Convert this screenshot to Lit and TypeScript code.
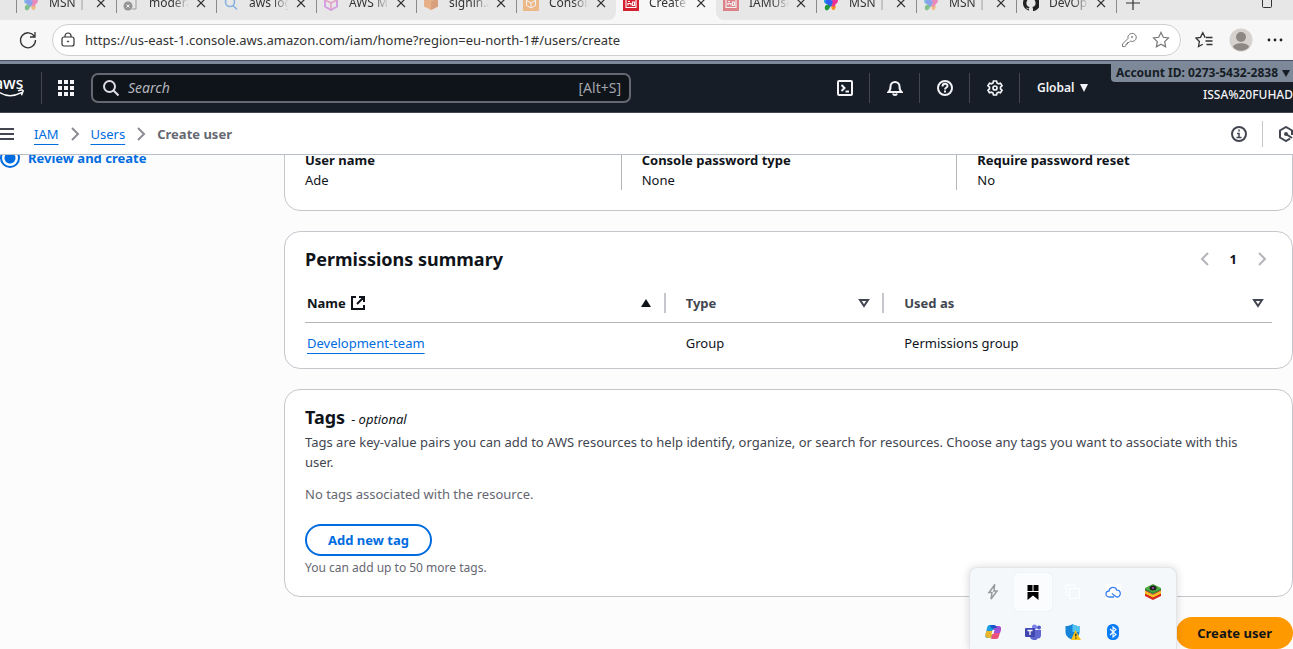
import { LitElement, html, svg, css } from "lit";
import { customElement } from "lit/decorators.js";

const msn = svg`<path d="M8 8C4 2 1 3 1 6s3 4 7 3z" fill="#1fa2e8"/><path d="M8 9C3 9 1 11 2 14s5 1 6-5z" fill="#1e9a3c"/><path d="M8 8c1-6 7-7 7-3s-3 5-7 4z" fill="#e8309a"/><path d="M8 9c4 0 6 2 4 5s-4 0-4-5z" fill="#f7931e"/><path d="M2 7l6 5 2-5-4-5z" fill="#2f5ff0"/><path d="M10 7l4 0-3 5-2-1z" fill="#f0308a"/>`;
const iam = svg`<rect width="16" height="16" fill="#d5202f"/><path d="M3 4h10v8.500H3zM5 10.500V8.500h3v2M9.500 7h2v3.500h-2zM5 6.500h2" fill="none" stroke="#fff" stroke-width="1.100"/>`;
const icons: Record<string, unknown> = {
  msn,
  iam,
  moderation: svg`<path d="M6 2h7v12H9" fill="none" stroke="#555"/><circle cx="5" cy="11" r="4.500" fill="#444"/><path d="M3.500 9.500l3 3m0-3l-3 3" stroke="#fff"/>`,
  search: svg`<circle cx="7" cy="7" r="4.500" fill="none" stroke="#2a7fd9" stroke-width="1.600"/><path d="M10 10.500l4 4" stroke="#2a7fd9" stroke-width="1.600"/>`,
  cube: svg`<path d="M8 1l6 3.500v7L8 15l-6-3.500v-7z" fill="none" stroke="#c05be0" stroke-width="2"/><path d="M2 5l6 3 6-3M8 8v7" fill="none" stroke="#e0559b" stroke-width="1.500"/>`,
  box: svg`<path d="M8 0l7 3v8.500L8 15l-7-3.500V3z" fill="#e8782c"/><path d="M8 7l7-4v8.500L8 15z" fill="#c95a14"/>`,
  console: svg`<rect width="16" height="16" fill="#f08a28"/><path d="M8 3l4.500 2.500v5L8 13l-4.500-2.500v-5zM3.500 5.500L8 8l4.500-2.500M8 8v5" fill="none" stroke="#fff"/>`,
  github: svg`<path d="M8 0a8 8 0 0 0-2.500 15.600c.5 0 .5-.5.5-1.500C3.500 14.500 3.500 13 3 12.500c1 0 1.500 1.500 3 1 0-.8.500-1.200.700-1.400C4 11.500 3.400 9.500 3.400 8c0-1 .3-1.700.8-2.200 0-.6-.2-1.300.1-2.100 1 0 1.700.6 2.200 1h3c.5-.4 1.200-1 2.200-1 .3.8.1 1.500.1 2.100.5.500.8 1.200.8 2.200 0 1.500-.6 3.500-3.300 4.100.4.400.7 1 .7 2v1.500c0 .4 0 .5.5.5A8 8 0 0 0 8 0z" fill="#222"/>`,
};

const icon = (name: string) => html`<svg class="fav" viewBox="0 0 16 16" aria-hidden="true">${icons[name]}</svg>`;

const tabs = [
  { icon: "msn", title: "MSN | Personal", dim: true },
  { icon: "moderation", title: "moderation", dim: true },
  { icon: "search", title: "aws login", dim: true },
  { icon: "cube", title: "AWS Management", dim: true },
  { icon: "box", title: "signin.aws", dim: true },
  { icon: "console", title: "Console Home", dim: true },
  { icon: "iam", title: "Create user", active: true },
  { icon: "iam", title: "IAMUser", dim: true },
  { icon: "msn", title: "MSN | Personal" },
  { icon: "msn", title: "MSN | Personal", dim: true },
  { icon: "github", title: "DevOps" },
];

@customElement("browser-chrome")
export class BrowserChrome extends LitElement {
  static styles = css`
    :host { display: block; font-family: "Noto Sans", sans-serif; background: #f7f7f7; color: #333; }
    * { box-sizing: border-box; }
    button { border: 0; background: none; padding: 0; color: inherit; font: inherit; }
    svg { display: block; fill: none; stroke: currentColor; }
    .strip { height: 20px; display: flex; align-items: flex-end; overflow: hidden; background: #f7f7f7; }
    .lead { width: 16px; height: 34px; flex: none; background: #e7e7e7; }
    .tab { width: 100px; height: 34px; flex: none; display: flex; align-items: center; padding: 0 10px 0 6px; background: #e7e7e7; }
    .tab::before { content: ""; width: 1px; height: 20px; background: #8a8a8a; margin-left: -6px; margin-right: 6px; }
    .tab.active, .tab.active::before, .tab.after::before { background: transparent; }
    .tab.before { border-bottom-right-radius: 8px; }
    .tab.after { border-bottom-left-radius: 8px; }
    .fav { width: 16px; height: 16px; flex: none; stroke: none; }
    .dim .fav { opacity: 0.5; }
    .title { width: 40px; flex: none; margin-left: 10px; font-size: 12px; line-height: 16px; overflow: hidden; white-space: nowrap; mask-image: linear-gradient(90deg, #000 60%, transparent); }
    .close { margin-left: auto; }
    .rest { flex: 1; height: 34px; display: flex; align-items: center; justify-content: space-between; padding: 0 20px 0 10px; background: #e7e7e7; }
    .rest::before { content: ""; width: 1px; height: 20px; background: #8a8a8a; margin-left: -10px; }
    .new { margin-left: 9px; margin-right: auto; }
    .bar { height: 40px; display: flex; align-items: center; padding: 0 10px 0 18px; }
    .field { flex: 1; height: 32px; display: flex; align-items: center; gap: 10px; margin: 0 14px; padding: 0 10px 0 8px; background: #fff; border: 1px solid #cfcfcf; border-radius: 16px; }
    .url { flex: 1; min-width: 0; border: 0; outline: 0; padding: 0; background: none; color: #333; font: 13px/20px "Noto Sans", sans-serif; }
    .gray { color: #777; }
    .star { margin-left: 5px; }
    .end { display: flex; align-items: center; gap: 14px; }
  `;
  render() {
    return html`
      <div class="strip" role="tablist">
        <span class="lead"></span>
        ${tabs.map(
          (t, i) => html`<div class="tab ${t.active ? "active" : ""} ${t.dim ? "dim" : ""} ${i === 5 ? "before" : i === 7 ? "after" : ""}" role="tab">
            ${icon(t.icon)}<span class="title">${t.title}</span>
            <button class="close" aria-label="Close tab"><svg width="10" height="10"><path d="M1 1l8 8m0-8l-8 8" stroke-width="1.200" /></svg></button>
          </div>`
        )}
        <div class="rest">
          <button class="new" aria-label="New tab"><svg width="14" height="14"><path d="M7 0v14M0 7h14" stroke-width="1.200" /></svg></button>
          <button aria-label="Maximize"><svg width="11" height="11"><rect x=".5" y=".5" width="9" height="9" rx="1" /></svg></button>
        </div>
      </div>
      <div class="bar">
        <button aria-label="Refresh"><svg width="20" height="20" viewBox="0 0 20 20"><path d="M16.500 6.500A7.500 7.500 0 1 0 17.500 10M17 2v5h-5" stroke-width="1.300" /></svg></button>
        <div class="field">
          <svg width="14" height="16" viewBox="0 0 14 16"><rect x="1" y="5" width="12" height="9" rx="2" stroke-width="1.200"/><path d="M4 5V4a3 3 0 0 1 6 0v1" stroke-width="1.200"/><circle cx="7" cy="9.500" r=".6" fill="currentColor"/></svg>
          <input class="url" aria-label="Address" value="https://us-east-1.console.aws.amazon.com/iam/home?region=eu-north-1#/users/create" />
          <button class="gray" aria-label="Passwords"><svg width="16" height="16" viewBox="0 0 16 16"><path d="M10.500 1.500a4 4 0 1 1-1 7.500L8 10.500H6.500V12H5v1.500L3.800 14.500H1.500v-2.500L7 6.500a4 4 0 0 1 3.500-5z"/><circle cx="11" cy="5" r=".6"/></svg></button>
          <button class="gray star" aria-label="Favorite"><svg width="18" height="18" viewBox="0 0 18 18"><path d="M9 1.500l2.300 4.800 5.200.7-3.800 3.600.9 5.200L9 13.300l-4.600 2.500.9-5.200L1.500 7l5.200-.7z" stroke-width="1.200"/></svg></button>
        </div>
        <div class="end">
          <button aria-label="Favorites"><svg width="20" height="18" viewBox="0 0 20 18"><path d="M10.500 6.300H10L7.800 1.800 5.500 6.300 1 7l3.400 3.500-.9 5 4.300-2.300M11 6.500h6.500M10.500 10H17.500M11.500 13.500h6" stroke-width="1.300"/></svg></button>
          <button aria-label="Profile"><svg width="24" height="24" viewBox="0 0 24 24" stroke="none"><circle cx="12" cy="12" r="11.500" fill="#d5d2cf" stroke="none"/><circle cx="12" cy="9" r="5" fill="#8d8883" stroke="none"/><path d="M4 19c1-5 15-5 16 0-4 5-12 5-16 0z" fill="#8d8883" stroke="none"/></svg></button>
          <button aria-label="Settings and more"><svg width="16" height="4" viewBox="0 0 16 4"><g fill="#222" stroke="none"><circle cx="2" cy="2" r="1.400"/><circle cx="8" cy="2" r="1.400"/><circle cx="14" cy="2" r="1.400"/></g></svg></button>
        </div>
      </div>
    `;
  }
}

@customElement("aws-header")
export class AwsHeader extends LitElement {
  static styles = css`
    :host { display: block; font-family: "Noto Sans", sans-serif; }
    * { box-sizing: border-box; }
    button { border: 0; background: none; padding: 0; color: inherit; font: inherit; }
    svg { display: block; fill: none; stroke: currentColor; stroke-width: 2; }
    .band { height: 4px; background: #7d8998; border-top: 1px solid #424f5f; }
    .top { height: 49px; display: flex; align-items: center; background: #161d26; color: #f3f3f7; border-bottom: 1px solid #424650; }
    .logo { width: 42px; height: 32px; flex: none; border-right: 1px solid #424650; }
    .mark { font: 500 16px "Noto Sans", sans-serif; fill: #fff; stroke: none; }
    .apps { width: 49px; display: flex; justify-content: center; padding-right: 1px; }
    .search { width: 540px; height: 30px; flex: none; display: flex; align-items: center; gap: 9px; padding: 0 8px 0 10px; border: 2px solid #656871; border-radius: 7px; background: #0f141a; color: #dedee3; font-size: 14px; line-height: 20px; }
    .search input { flex: 1; min-width: 0; border: 0; outline: 0; background: none; padding: 0; color: #dedee3; font: italic 14px/20px "Noto Sans", sans-serif; }
    .search input::placeholder { color: #b4b4bb; }
    .hint { color: #a4a4ad; }
    .tools { margin-left: auto; height: 48px; display: flex; align-items: center; }
    .tool { width: 50px; height: 30px; display: flex; align-items: center; justify-content: center; border-right: 1px solid #424650; }
    .global { width: 91px; display: flex; align-items: center; gap: 6px; padding-left: 17px; font-size: 12px; font-weight: 600; line-height: 16px; }
    .account { width: 182px; height: 48px; display: flex; flex-direction: column; align-items: flex-end; gap: 5px; font-size: 12px; line-height: 16px; font-weight: 500; }
    .id { width: 100%; height: 18px; display: flex; align-items: center; justify-content: flex-end; gap: 4px; padding-right: 3px; white-space: nowrap; border-bottom-left-radius: 4px; background: #7d8998; color: #161d26; font-weight: 700; }
    .crumbs { height: 42px; display: flex; align-items: center; gap: 11px; background: #fff; border-bottom: 1px solid #b6bec9; color: #424650; font-size: 13px; line-height: 20px; }
    .crumbs nav { display: flex; align-items: center; gap: 11px; margin-left: 9px; }
    .crumbs a { color: #006ce0; text-decoration: underline; text-underline-offset: 5px; }
    .sep { color: #8c8c94; }
    .now { font-weight: 700; color: #656871; }
    .side { margin-left: auto; display: flex; align-items: center; overflow: hidden; }
    .info { padding-right: 15px; border-right: 1px solid #c6c6cd; height: 26px; }
    .hex { width: 15px; margin-left: 15px; overflow: hidden; }
  `;
  render() {
    return html`
      <div class="band"></div>
      <header class="top">
        <svg class="logo" viewBox="0 0 42 32"><text class="mark" x="-6" y="17">aws</text><path d="M-2 19.500c8 6 17 5 24.500 1M18.500 19c3-1.500 6-1 5 .5l-1.500 4" stroke="#fff" stroke-width="1.500"/></svg>
        <button class="apps" aria-label="Services"><svg width="16" height="16" viewBox="0 0 16 16"><path d="M0 2h16M0 8h16M0 14h16" stroke-width="4" stroke-dasharray="4 2"/></svg></button>
        <label class="search">
          <svg width="16" height="16" viewBox="0 0 16 16"><circle cx="6.500" cy="6.500" r="5.500"/><path d="M10.500 10.500l5 5"/></svg>
          <input placeholder="Search" aria-label="Search" /><span class="hint">[Alt+S]</span>
        </label>
        <div class="tools">
          <button class="tool" aria-label="CloudShell"><svg width="16" height="16" viewBox="0 0 16 16"><rect x="1" y="1" width="14" height="14" rx="1"/><path d="M4.500 5L7.500 8 4.500 11M8.500 11.500H12"/></svg></button>
          <button class="tool" aria-label="Notifications"><svg width="16" height="16" viewBox="0 0 16 16"><path d="M1.500 12c2-1.500 2-3 2-5.500a4.500 4.500 0 0 1 9 0c0 2.500 0 4 2 5.500zM6 13.500c.5 2 3.500 2 4 0"/></svg></button>
          <button class="tool" aria-label="Help"><svg width="16" height="16" viewBox="0 0 16 16"><circle cx="8" cy="8" r="7"/><path d="M5.500 6.500C5.500 3 10.500 3 10.500 6c0 1.500-2.500 1.500-2.500 3.500M8 10.500v2"/></svg></button>
          <button class="tool" aria-label="Settings"><svg width="16" height="16" viewBox="0 0 16 16"><path d="M6.500 1h3l.5 2 1.500.8 2-.6 1.500 2.600L13.500 7.200v1.600L15 10.200l-1.500 2.600-2-.6-1.500.8-.5 2h-3L6 13l-1.500-.8-2 .6L1 10.200l1.500-1.400V7.200L1 5.800l1.500-2.600 2 .6L6 3z" stroke-width="1.700"/><circle cx="8" cy="8" r="2" stroke-width="1.700"/></svg></button>
          <button class="global">Global <svg width="8" height="8"><path d="M0 0h8L4 8z" fill="currentColor" stroke="none"/></svg></button>
          <div class="account">
            <button class="id">Account ID: 0273-5432-2838 <svg width="8" height="7"><path d="M0 0h8L4 7z" fill="currentColor" stroke="none"/></svg></button>
            <span>ISSA%20FUHAD</span>
          </div>
        </div>
      </header>
      <div class="crumbs">
        <button aria-label="Open navigation"><svg width="14" height="14"><path d="M0 2h14M0 7h14M0 12h14"/></svg></button>
        <nav aria-label="Breadcrumbs">
          <a href="#iam">IAM</a>
          <svg class="sep" width="10" height="14"><path d="M2 1l6 6-6 6"/></svg>
          <a href="#users">Users</a>
          <svg class="sep" width="10" height="14"><path d="M2 1l6 6-6 6"/></svg>
          <span class="now">Create user</span>
        </nav>
        <div class="side">
          <button class="info" aria-label="Info"><svg width="16" height="16" viewBox="0 0 16 16"><circle cx="8" cy="8" r="7"/><path d="M8 3.500v2M6 7.500h2v4M5.500 11.500h5" stroke-width="1.500"/></svg></button>
          <button class="hex" aria-label="Assistant"><svg width="16" height="16" viewBox="0 0 16 16"><path d="M14 9V4.500L8 1 2 4.500v7L8 15l4-2.300"/><path d="M8 8l6 4"/><circle cx="8" cy="8" r="1" fill="currentColor"/></svg></button>
        </div>
      </div>
    `;
  }
}

@customElement("system-tray")
export class SystemTray extends LitElement {
  static styles = css`
    :host { display: grid; grid-template-columns: repeat(5, 40px); grid-auto-rows: 40px; padding: 4px 3px 0; background: #f5f8fb; border: 1px solid #e3e5e8; border-bottom: 0; border-radius: 8px 8px 0 0; box-shadow: 0 0 8px rgba(0, 0, 0, 0.15); }
    button { display: flex; align-items: center; justify-content: center; padding: 0; margin: 1px; border: 0; border-radius: 4px; background: none; }
    .on { background: #fbfcfd; box-shadow: 0 0 1px #c8ccd2; }
  `;
  render() {
    const glyphs: [string, unknown][] = [
      ["Power", svg`<path d="M9.500 1L4 8.500h3L6 15l6-8H9z" fill="none" stroke="#999" stroke-width="1.500"/>`],
      ["Bookmark", svg`<path d="M2.500 1h5v6h-5zM8.500 1h5v6h-5zM2.500 8h11v8L8 11.500 2.500 16z" fill="#000"/>`],
      ["Windows", svg`<path d="M1 1h9v3M1 1v10h3M4.500 4.500h10v10h-10z" fill="none" stroke="#fff"/>`],
      ["Cloud", svg`<rect width="16" height="16" rx="2" fill="#fff"/><path d="M9 13H4a3 3 0 0 1 0-6 4 4 0 0 1 7.800-.8A3.400 3.400 0 0 1 12 13c-2 0-3-2-5-3.500" fill="none" stroke="#3b82f0" stroke-width="1.300"/>`],
      ["Emulator", svg`<path d="M0 9l8 4 8-4v3l-8 4-8-4z" fill="#d9251f"/><path d="M0 7l8 4 8-4v2.500l-8 4-8-4z" fill="#f6c51b"/><path d="M0 5.500l8 4 8-4V7l-8 4-8-4z" fill="#e04a22"/><path d="M0 4l8 4 8-4v2l-8 4-8-4z" fill="#2a8c35"/><path d="M8 0l8 4-8 4.500L0 4z" fill="#4dab3c"/><ellipse cx="8" cy="4" rx="3.500" ry="2.500" fill="#222"/><circle cx="8" cy="4" r="1" fill="#a050c0"/>`],
      ["Copilot", svg`<path d="M5 1h5L7 12c-.5 2-1.500 2-3 2H3c-3 0-3-2-2-5l1-5c.5-2 1-3 3-3z" fill="#1b9de2"/><path d="M1.500 7H8l-1.300 5c-.5 2-1.500 2-3 2-3 0-4-2-3-5z" fill="#e9b62c"/><path d="M11 15H6L9 4c.5-2 1.500-2 3-2h1c3 0 3.500 2 2.500 5l-1.500 5c-.5 2-1 3-3 3z" fill="#e8527c"/><path d="M9 4c.5-2 1.500-2 3-2h1c3 0 3.500 2 2.500 5L15 9H7.500z" fill="#a24fd8"/><path d="M5 1h4c2 0 2.500 2 3 3H9.500L7 5z" fill="#1a56c8"/><path d="M7.500 6h2L8.500 10h-2z" fill="#fff"/>`],
      ["Teams", svg`<circle cx="9.500" cy="3" r="2.500" fill="#7b83eb"/><circle cx="14" cy="3.500" r="2" fill="#5059c9"/><path d="M5 6h11v5c0 3-2 4-3 3-1 3-7 3-8-1z" fill="#6068d0"/><rect y="4" width="10" height="9" rx="1" fill="#4048b0"/><path d="M2.500 6.500h5M5 6.500V11" stroke="#fff" stroke-width="1.300"/>`],
      ["Security", svg`<path d="M7.500 0c2 1.500 4 2 7 2v6c0 4-3 6-7 8-4-2-7-4-7-8V2c3 0 5-.5 7-2z" fill="#1583d6"/><path d="M7.500 0v8h7V2c-3 0-5-.5-7-2z" fill="#50c3f0"/><path d="M10.500 6L16 16H6z" fill="#fcc51c"/><path d="M10.900 9.500v3M10.900 13.500v1.200" stroke="#222" stroke-width="1.200"/>`],
      ["Bluetooth", svg`<rect x="2" width="12" height="16" rx="5.500" fill="#0a7cf5"/><path d="M5 5l6 5.500L8 13V3l3 2.500L5 11" fill="none" stroke="#fff" stroke-width="1.100"/>`],
    ];
    return glyphs.map(([n, g]) => html`<button class=${n === "Bookmark" ? "on" : ""} aria-label=${n}><svg width="16" height="16" viewBox="0 0 16 16">${g}</svg></button>`);
  }
}

const facts = [
  ["User name", "Ade"],
  ["Console password type", "None"],
  ["Require password reset", "No"],
];

@customElement("app-root")
export class AppRoot extends LitElement {
  static styles = css`
    :host { position: relative; display: flex; flex-direction: column; height: 100vh; overflow: hidden; background: #fcfcfd; color: #0f141a; font: 13px/20px "Noto Sans", sans-serif; }
    * { box-sizing: border-box; }
    h2, p, dl, dd { margin: 0; }
    button { font: inherit; padding: 0; border: 0; background: none; color: inherit; }
    a { color: #006ce0; text-decoration: underline; text-underline-offset: 5px; }
    svg { display: block; }
    .view { flex: 1; min-height: 0; display: flex; align-items: flex-start; overflow: hidden; }
    .steps { width: 284px; flex: none; display: flex; align-items: center; margin-top: -7px; color: #006ce0; font-weight: 700; }
    .steps input { appearance: none; width: 20px; height: 20px; margin: 0; border: 2px solid #006ce0; border-radius: 50%; background: radial-gradient(circle, #006ce0 5px, #fff 6px); }
    .steps label { display: flex; align-items: center; gap: 8px; }
    .cards { flex: 1; min-width: 0; display: flex; flex-direction: column; gap: 20px; margin-top: -26px; }
    .card { padding: 20px; border: 1px solid #c6c6cd; border-radius: 16px; background: #fff; }
    .facts { display: grid; grid-template-columns: repeat(3, 1fr); margin: 0 -20px; }
    .fact { padding: 0 20px; }
    .fact + .fact { border-left: 1px solid #b4b4bb; }
    dt { font-weight: 700; }
    .head { display: flex; justify-content: space-between; align-items: center; }
    h2 { font-size: 18px; line-height: 24px; font-weight: 700; }
    .pages { display: flex; align-items: center; gap: 20px; padding: 0 5px; font-weight: 700; }
    .pages button { color: #b4b4bb; }
    .card.perm { padding-top: 15px; padding-bottom: 14px; }
    table { width: 100%; margin-top: 10px; table-layout: fixed; border-collapse: collapse; text-align: left; }
    th { height: 41px; padding: 0 0 9px; vertical-align: bottom; border-bottom: 1px solid #b4b4bb; color: #424650; }
    th.sorted { color: #0f141a; }
    .c1 { width: 37.3%; }
    .c2 { width: 22.6%; }
    .cell { display: flex; align-items: center; gap: 4px; padding: 0 8px 0 20px; height: 20px; }
    .c1 .cell { padding: 0 12px 0 2px; border-right: 2px solid #c6c6cd; }
    .c2 .cell { padding-right: 12px; border-right: 2px solid #c6c6cd; }
    .sort { margin-left: auto; }
    td { height: 32px; padding: 10px 20px 0; vertical-align: top; }
    td:first-child { padding-left: 2px; }
    .card.tags { padding-top: 15px; }
    .title { display: flex; align-items: baseline; gap: 6px; }
    .soft { margin-top: 3px; padding-right: 8px; color: #424650; }
    .none { margin-top: 12px; color: #656871; }
    .add { display: block; height: 32px; margin-top: 20px; padding: 0 21px; border: 2px solid #006ce0; border-radius: 16px; color: #006ce0; font-weight: 700; }
    .limit { margin-top: 4px; font-size: 12px; line-height: 16px; color: #656871; }
    .foot { display: flex; justify-content: flex-end; }
    .create { height: 32px; padding: 0 21px; border-radius: 16px; background: #ff9900; font-weight: 700; }
    .tray { position: absolute; right: 116px; bottom: 0; height: 82px; box-sizing: border-box; overflow: hidden; }
  `;
  render() {
    return html`
      <browser-chrome></browser-chrome>
      <aws-header></aws-header>
      <main class="view">
        <div class="steps"><label><input type="radio" checked />Review and create</label></div>
        <div class="cards">
          <section class="card">
            <dl class="facts">${facts.map(([k, v]) => html`<div class="fact"><dt>${k}</dt><dd>${v}</dd></div>`)}</dl>
          </section>
          <section class="card perm">
            <div class="head">
              <h2>Permissions summary</h2>
              <div class="pages">
                <button aria-label="Previous page"><svg width="10" height="14"><path d="M8 1L2 7l6 6" fill="none" stroke="currentColor" stroke-width="2"/></svg></button>
                <span>1</span>
                <button aria-label="Next page"><svg width="10" height="14"><path d="M2 1l6 6-6 6" fill="none" stroke="currentColor" stroke-width="2"/></svg></button>
              </div>
            </div>
            <table>
              <thead><tr>
                <th class="c1 sorted"><div class="cell">Name <svg width="16" height="16" viewBox="0 0 16 16"><path d="M6 2H2v12h12v-4M9 2h5v5M14 2L7 9" fill="none" stroke="currentColor" stroke-width="2"/></svg><svg class="sort" width="12" height="10"><path d="M6 1l5 8H1z" fill="currentColor"/></svg></div></th>
                <th class="c2"><div class="cell">Type <svg class="sort" width="12" height="10"><path d="M2 2h8L6 8z" fill="none" stroke="currentColor" stroke-width="2"/></svg></div></th>
                <th><div class="cell">Used as <svg class="sort" width="12" height="10"><path d="M2 2h8L6 8z" fill="none" stroke="currentColor" stroke-width="2"/></svg></div></th>
              </tr></thead>
              <tbody><tr><td><a href="#group">Development-team</a></td><td>Group</td><td>Permissions group</td></tr></tbody>
            </table>
          </section>
          <section class="card tags">
            <div class="title"><h2>Tags</h2><em>- optional</em></div>
            <p class="soft">Tags are key-value pairs you can add to AWS resources to help identify, organize, or search for resources. Choose any tags you want to associate with this user.</p>
            <p class="none">No tags associated with the resource.</p>
            <button class="add">Add new tag</button>
            <p class="limit">You can add up to 50 more tags.</p>
          </section>
          <div class="foot"><button class="create">Create user</button></div>
        </div>
      </main>
      <system-tray class="tray"></system-tray>
    `;
  }
}
